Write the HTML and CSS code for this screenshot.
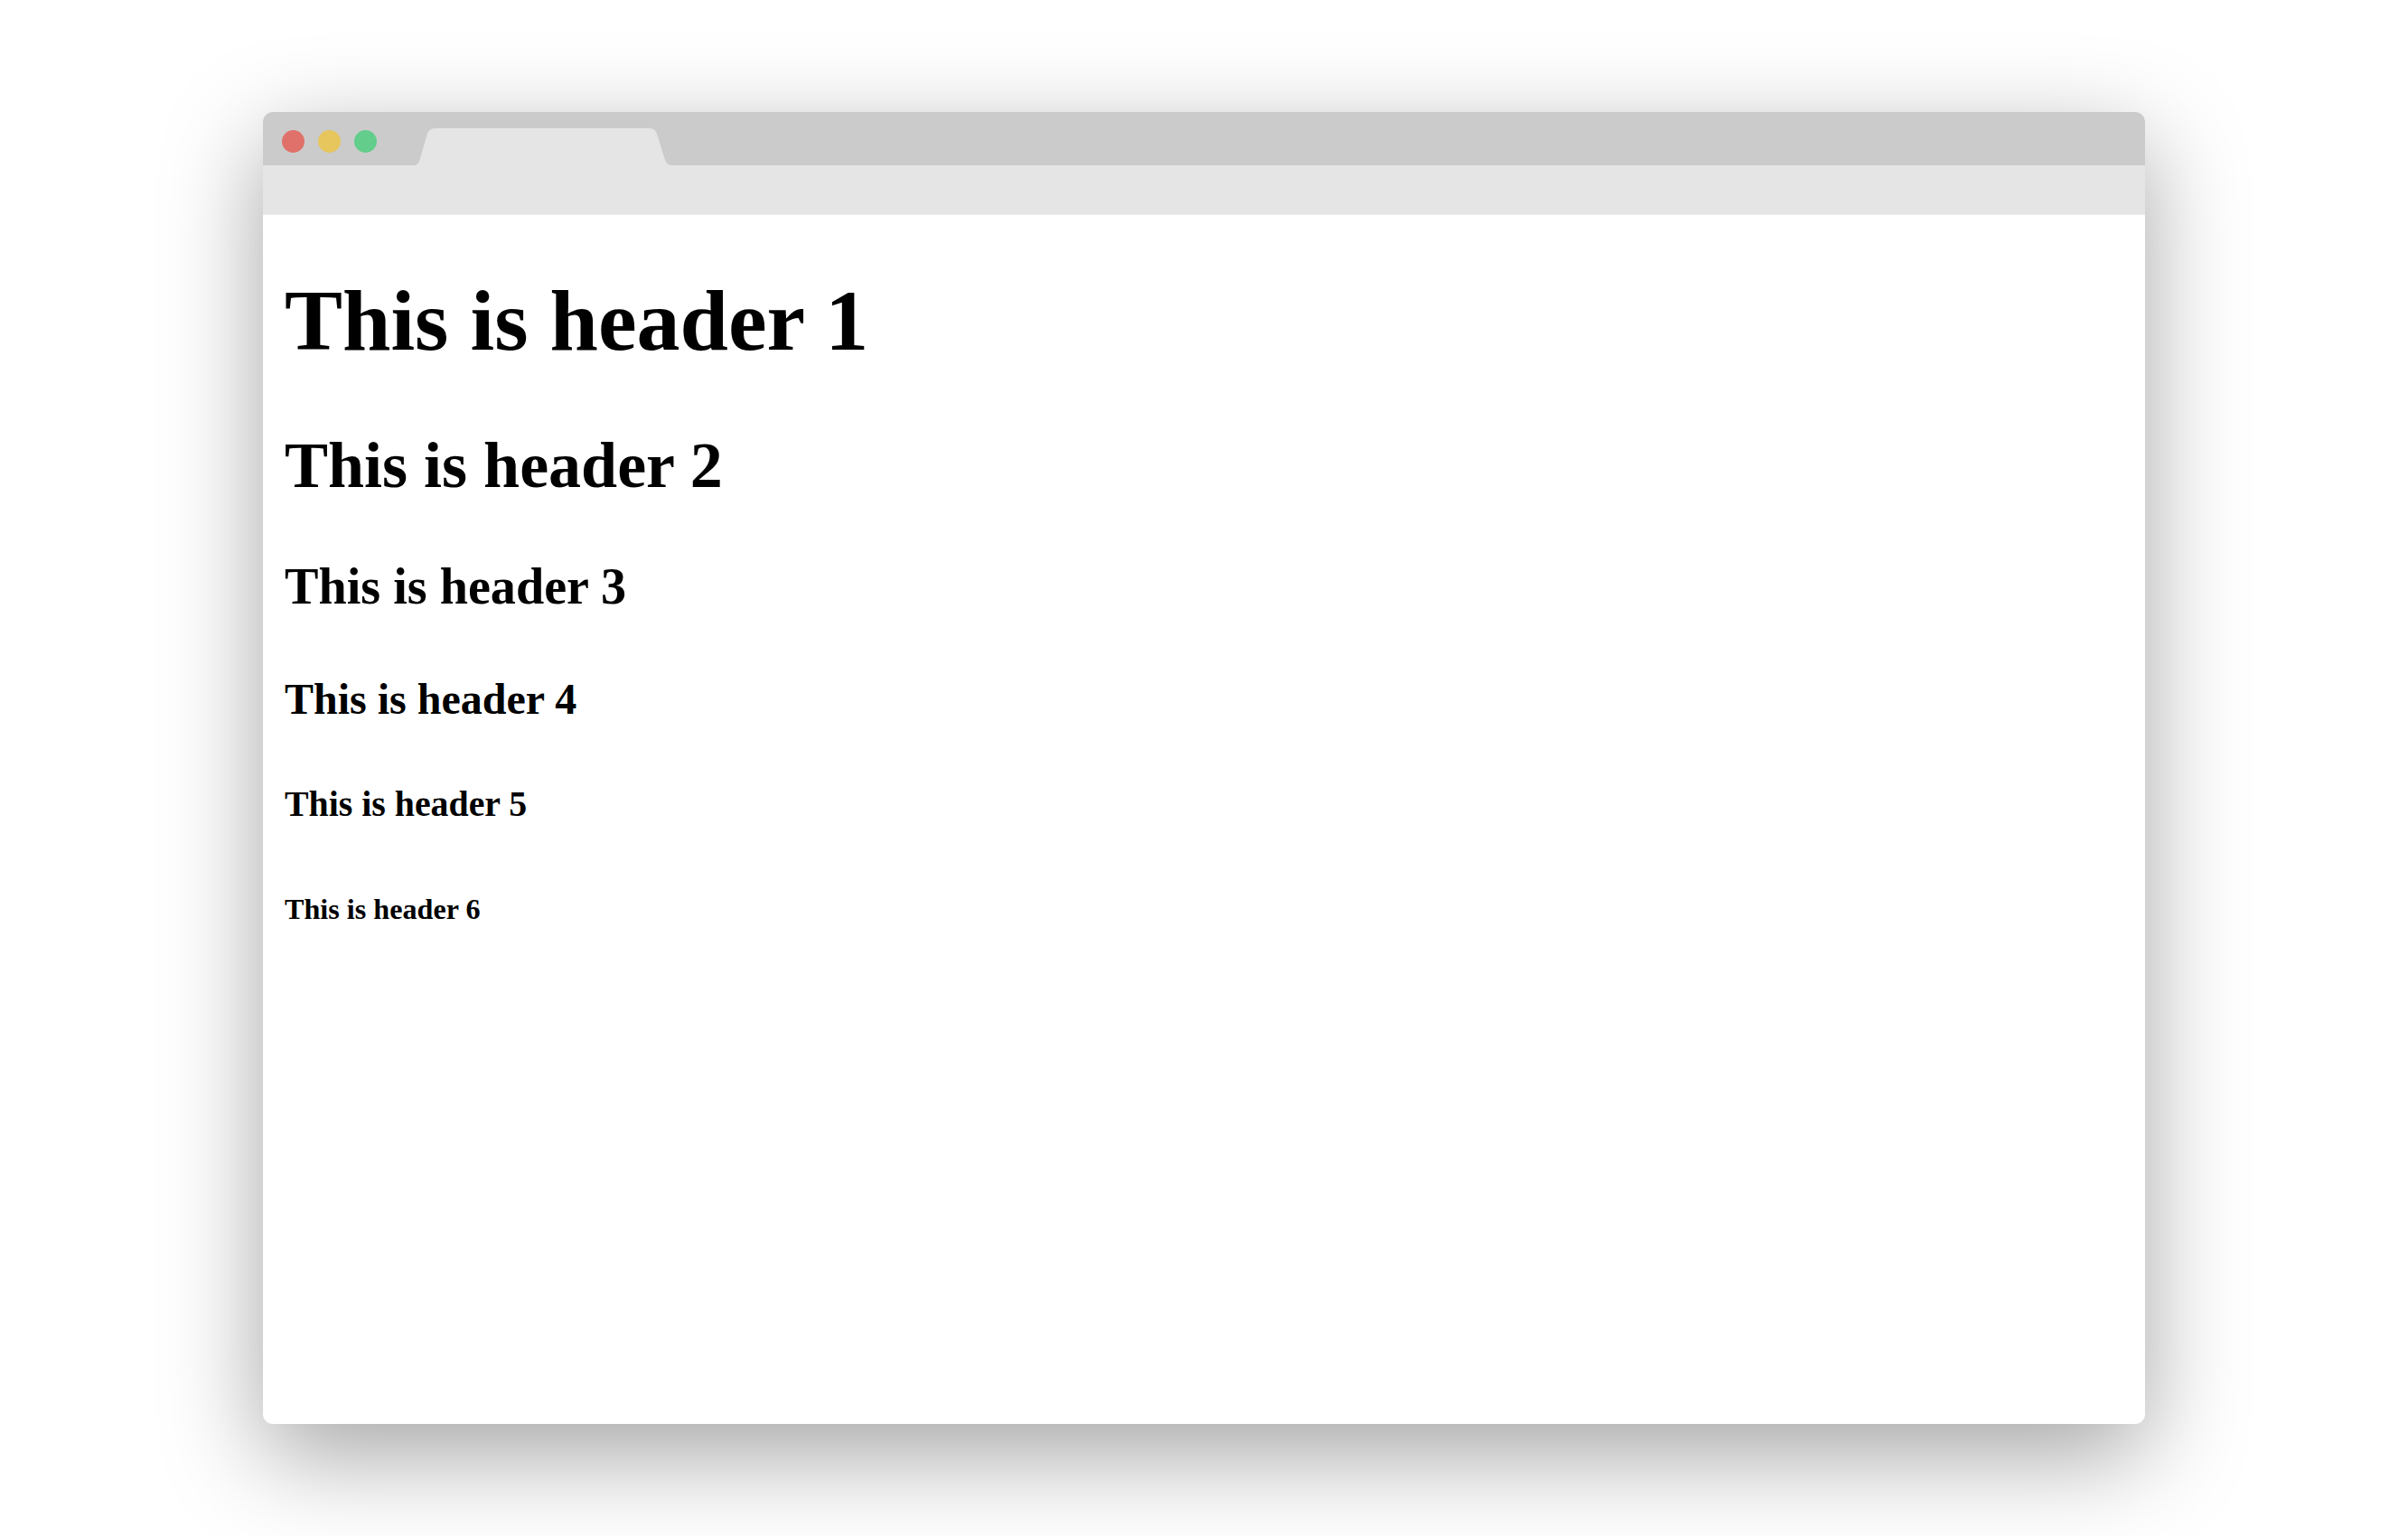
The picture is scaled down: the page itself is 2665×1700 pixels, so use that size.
FILE: index.html
```html
<!DOCTYPE html>
<html>
<head>
<meta charset="utf-8">
<link rel="stylesheet" href="styles.css">
</head>
<body>
<div class="stage">
  <div class="window">
    <div class="titlebar">
      <div class="dots">
        <span class="dot red"></span>
        <span class="dot yellow"></span>
        <span class="dot green"></span>
      </div>
      <svg class="tab" width="287" height="41" viewBox="0 0 287 41">
        <path d="M0,41 Q6,41 7.5,35 L16,6 Q18,0 24,0 L262,0 Q268,0 270,6 L279,35 Q281,41 287,41 Z" fill="#e5e5e5"/>
      </svg>
    </div>
    <div class="toolbar"></div>
    <div class="content">
      <h1>This is header 1</h1>
      <h2>This is header 2</h2>
      <h3>This is header 3</h3>
      <h4>This is header 4</h4>
      <h5>This is header 5</h5>
      <h6>This is header 6</h6>
    </div>
  </div>
</div>
</body>
</html>
```
FILE: styles.css
```css
html, body {
  margin: 0;
  padding: 0;
  background: #ffffff;
}
.stage {
  width: 2665px;
  height: 1700px;
  padding: 124px 0 0 291px;
  box-sizing: border-box;
  overflow: hidden;
}
.window {
  width: 2083px;
  height: 1452px;
  background: #ffffff;
  border-radius: 11px;
  box-shadow: 0 34px 110px rgba(0, 0, 0, 0.36);
  display: flex;
  flex-direction: column;
  overflow: hidden;
}
.titlebar {
  height: 59px;
  background: #cbcbcb;
  display: flex;
  align-items: flex-end;
  flex-shrink: 0;
}
.dots {
  display: flex;
  gap: 15px;
  padding-left: 21px;
  align-self: flex-start;
  padding-top: 20px;
}
.dot {
  width: 25px;
  height: 25px;
  border-radius: 50%;
  display: block;
}
.red { background: #e0716a; }
.yellow { background: #e6c65d; }
.green { background: #63cd8b; }
.tab {
  display: block;
  margin-left: 40px;
}
.toolbar {
  height: 54px;
  background: #e5e5e5;
  border-bottom: 1px solid #ececec;
  flex-shrink: 0;
}
.content {
  padding: 0 24px;
  font-family: "Liberation Serif", "Times New Roman", serif;
  color: #000;
  display: flow-root;
}
.content h1, .content h2, .content h3, .content h4, .content h5, .content h6 {
  font-weight: bold;
  line-height: 1.15;
}
.content h1 { font-size: 96px; margin: 62px 0 64px; }
.content h2 { font-size: 72px; margin: 60px 0; }
.content h3 { font-size: 56.16px; margin: 56px 0; }
.content h4 { font-size: 48px; margin: 64px 0; }
.content h5 { font-size: 39.84px; margin: 66.5px 0; }
.content h6 { font-size: 32.16px; margin: 75px 0; }
```
